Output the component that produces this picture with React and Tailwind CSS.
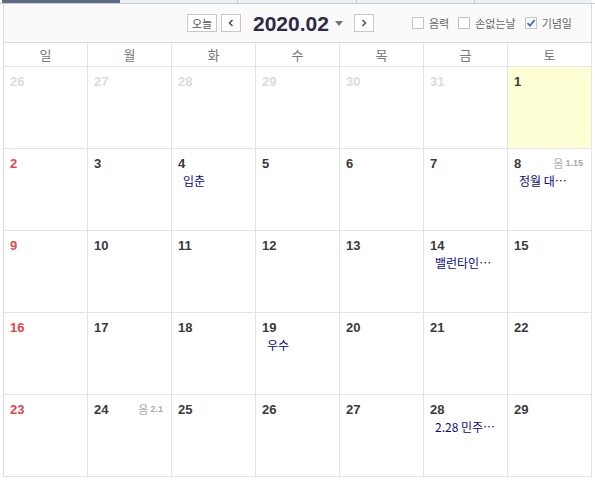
import React from 'react';

const weekDays = ['일', '월', '화', '수', '목', '금', '토'];

const weeks = [
  [{ d: 26, prev: true }, { d: 27, prev: true }, { d: 28, prev: true }, { d: 29, prev: true }, { d: 30, prev: true }, { d: 31, prev: true }, { d: 1, today: true }],
  [{ d: 2 }, { d: 3 }, { d: 4, event: '입춘' }, { d: 5 }, { d: 6 }, { d: 7 }, { d: 8, lunar: '1.15', event: '정월 대…' }],
  [{ d: 9 }, { d: 10 }, { d: 11 }, { d: 12 }, { d: 13 }, { d: 14, event: '밸런타인…' }, { d: 15 }],
  [{ d: 16 }, { d: 17 }, { d: 18 }, { d: 19, event: '우수' }, { d: 20 }, { d: 21 }, { d: 22 }],
  [{ d: 23 }, { d: 24, lunar: '2.1' }, { d: 25 }, { d: 26 }, { d: 27 }, { d: 28, event: '2.28 민주…' }, { d: 29 }],
];

const korFont = "font-['Noto_Sans_CJK_KR','Noto_Sans',sans-serif]";
const numFont = "font-['Liberation_Sans','Noto_Sans_CJK_KR',sans-serif]";

const Checkbox = ({ label, checked }) => (
  <label className="flex items-center gap-[5px]">
    <span className="w-[12px] h-[12px] border border-[#c4c4c4] bg-white flex items-center justify-center">
      {checked && (
        <svg width="10" height="10" viewBox="0 0 10 10">
          <path d="M1.5 5.2 L4 7.6 L8.6 2" fill="none" stroke="#3f6fa8" strokeWidth="1.8" />
        </svg>
      )}
    </span>
    <span className={`${korFont} text-[11px] text-[#666] leading-none`}>{label}</span>
  </label>
);

const Cell = ({ cell, col }) => {
  let color = 'text-[#3a3a3a]';
  if (cell.prev) color = 'text-[#dcdcdc]';
  else if (col === 0) color = 'text-[#e0464f]';

  return (
    <div
      className={`h-[82px] border-r border-b border-[#e4e4e4] pl-[6px] pr-[8px] pt-[7px] ${
        cell.today ? 'bg-[#ffffd6] border-[#e4e0b4]' : 'bg-white'
      }`}
    >
      <div className="flex items-center justify-between h-[14px]">
        <span className={`${numFont} font-bold text-[13px] leading-none ${color}`}>{cell.d}</span>
        {cell.lunar && (
          <span className="flex items-center gap-[2px] text-[#aaa] leading-none">
            <span className={`${korFont} text-[11px]`}>음</span>
            <span className={`${numFont} font-bold text-[9px]`}>{cell.lunar}</span>
          </span>
        )}
      </div>
      {cell.event && (
        <div className={`${korFont} text-[12px] leading-none text-[#0b0b80] mt-[5px] pl-[5px]`}>{cell.event}</div>
      )}
    </div>
  );
};

export default function App() {
  return (
    <div className="w-[595px] h-[480px] bg-white overflow-hidden">
      {/* top tab strip */}
      <div className="flex h-[4px] pl-[2px] pr-[3px] border-b border-[#c8ccd3]">
        <div className="w-[118px] bg-[#5b6a82]" />
        <div className="w-[118px] bg-[#eef0f3] border-r border-[#c8ccd3]" />
        <div className="w-[119px] bg-[#eef0f3] border-r border-[#c8ccd3]" />
        <div className="w-[118px] bg-[#eef0f3] border-r border-[#c8ccd3]" />
        <div className="flex-1 bg-[#eef0f3]" />
      </div>

      <div className="ml-[3px] w-[589px] border-l border-[#dcdcdc]">
        {/* header controls */}
        <div className="h-[38px] bg-[#fafafa] border-r border-[#dcdcdc] flex items-center pl-[183px] pr-[19px]">
          <button className={`${korFont} w-[30px] h-[18px] border border-[#c9c9c9] bg-white text-[11px] text-[#555] leading-none flex items-center justify-center`}>
            오늘
          </button>
          <button className="ml-[4px] w-[20px] h-[18px] border border-[#c9c9c9] bg-white flex items-center justify-center">
            <svg width="6" height="8" viewBox="0 0 6 8">
              <path d="M4.5 1 L1.5 4 L4.5 7" fill="none" stroke="#555" strokeWidth="1.6" />
            </svg>
          </button>
          <span className={`${numFont} ml-[12px] font-bold text-[21px] leading-none text-[#2b2b45]`}>2020.02</span>
          <svg className="ml-[6px]" width="8" height="5" viewBox="0 0 8 5">
            <path d="M0 0 L8 0 L4 5 Z" fill="#777" />
          </svg>
          <button className="ml-[11px] w-[20px] h-[18px] border border-[#c9c9c9] bg-white flex items-center justify-center">
            <svg width="6" height="8" viewBox="0 0 6 8">
              <path d="M1.5 1 L4.5 4 L1.5 7" fill="none" stroke="#555" strokeWidth="1.6" />
            </svg>
          </button>
          <div className="ml-auto flex items-center gap-[9px]">
            <Checkbox label="음력" />
            <Checkbox label="손없는날" />
            <Checkbox label="기념일" checked />
          </div>
        </div>

        {/* weekday header */}
        <div className="grid grid-cols-[repeat(7,84px)] border-t border-[#dcdcdc]">
          {weekDays.map((w) => (
            <div
              key={w}
              className={`${korFont} h-[24px] border-r border-b border-[#e4e4e4] flex items-center justify-center text-[13px] text-[#777]`}
            >
              {w}
            </div>
          ))}
        </div>

        {/* weeks */}
        {weeks.map((week, i) => (
          <div key={i} className="grid grid-cols-[repeat(7,84px)]">
            {week.map((cell, j) => (
              <Cell key={j} cell={cell} col={j} />
            ))}
          </div>
        ))}
      </div>
    </div>
  );
}
